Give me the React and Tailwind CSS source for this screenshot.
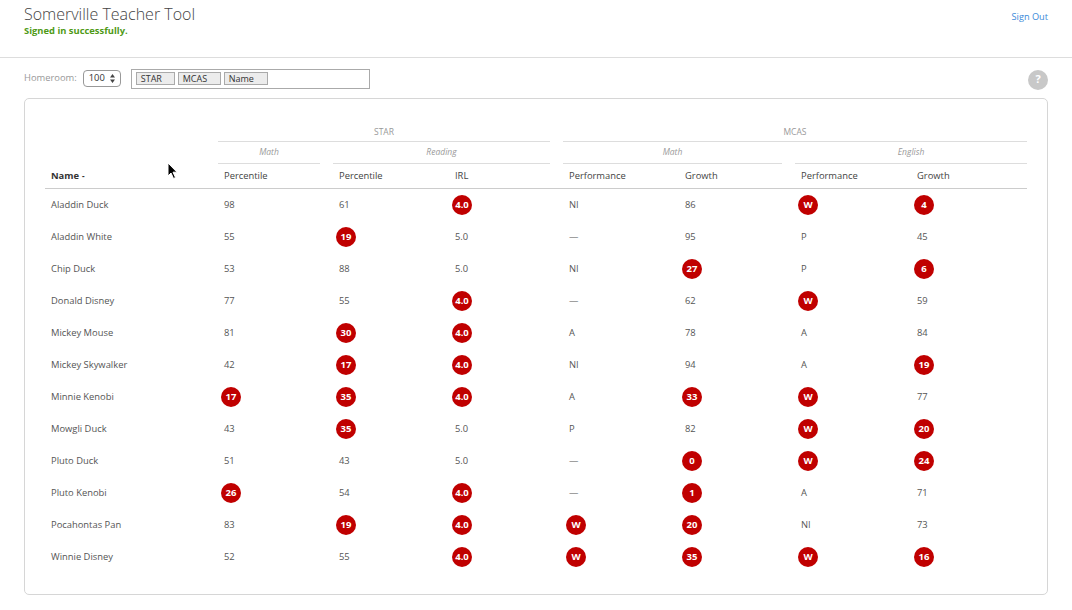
const rows = [
  ["Aladdin Duck", "98", "61", ["4.0"], "NI", "86", ["W"], ["4"]],
  ["Aladdin White", "55", ["19"], "5.0", "—", "95", "P", "45"],
  ["Chip Duck", "53", "88", "5.0", "NI", ["27"], "P", ["6"]],
  ["Donald Disney", "77", "55", ["4.0"], "—", "62", ["W"], "59"],
  ["Mickey Mouse", "81", ["30"], ["4.0"], "A", "78", "A", "84"],
  ["Mickey Skywalker", "42", ["17"], ["4.0"], "NI", "94", "A", ["19"]],
  ["Minnie Kenobi", ["17"], ["35"], ["4.0"], "A", ["33"], ["W"], "77"],
  ["Mowgli Duck", "43", ["35"], "5.0", "P", "82", ["W"], ["20"]],
  ["Pluto Duck", "51", "43", "5.0", "—", ["0"], ["W"], ["24"]],
  ["Pluto Kenobi", ["26"], "54", ["4.0"], "—", ["1"], "A", "71"],
  ["Pocahontas Pan", "83", ["19"], ["4.0"], ["W"], ["20"], "NI", "73"],
  ["Winnie Disney", "52", "55", ["4.0"], ["W"], ["35"], ["W"], ["16"]],
];

const cols = ["Percentile", "Percentile", "IRL", "Performance", "Growth", "Performance", "Growth"];

function Cell({ value }) {
  if (Array.isArray(value)) {
    return (
      <span className="-ml-[3px] inline-flex h-[20px] min-w-[20px] items-center justify-center rounded-full bg-[#c00000] px-[3px] text-[9.5px] font-bold text-white">
        {value[0]}
      </span>
    );
  }
  return <span>{value}</span>;
}

export default function App() {
  return (
    <div
      className="relative h-[610px] w-[1072px] overflow-hidden bg-white text-[9.4px] text-[#555]"
      style={{ fontFamily: '"Open Sans", "Liberation Sans", sans-serif' }}
    >
      {/* header */}
      <div className="flex h-[58px] items-start justify-between border-b border-[#ddd] px-[24px]">
        <div className="pt-[4px]">
          <h1 className="text-[16px] font-light leading-[20px] text-[#444]">Somerville Teacher Tool</h1>
          <p className="mt-[1px] text-[9.4px] font-bold leading-[12px] text-[#4f9a16]">Signed in successfully.</p>
        </div>
        <a className="mt-[10px] text-[9.2px] text-[#3b8ad9]">Sign Out</a>
      </div>

      {/* toolbar */}
      <div className="flex h-[40px] items-center justify-between px-[24px] pt-[1px]">
        <div className="flex items-center">
          <span className="text-[#999]">Homeroom:</span>
          <div className="ml-[6px] flex h-[17px] w-[38px] items-center justify-between rounded-[4px] border border-[#999] px-[5px] text-[9.4px] text-[#333]">
            <span>100</span>
            <svg width="5" height="9" viewBox="0 0 5 9">
              <path d="M2.5 0L5 3.5H0z M2.5 9L5 5.5H0z" fill="#444" />
            </svg>
          </div>
          <div className="ml-[10px] flex h-[20px] w-[239px] items-center gap-[3px] border border-[#aaa] px-[4px]">
            {[["STAR", 39], ["MCAS", 43], ["Name", 44]].map(([t, w]) => (
              <span
                key={t}
                style={{ width: w }}
                className="flex h-[13px] items-center border border-[#aaa] bg-[#ececec] px-[4px] text-[9px] leading-none text-[#333]"
              >
                {t}
              </span>
            ))}
          </div>
        </div>
        <div className="mt-[2px] flex h-[20px] w-[20px] items-center justify-center rounded-full bg-[#c8c8c8] text-[11px] font-bold text-white">
          ?
        </div>
      </div>

      {/* card */}
      <div className="mx-[24px] rounded-[5px] border border-[#d6d6d6] px-[20px] pb-[21px] pt-[24px]">
        <div className="grid grid-cols-[173px_115px_116px_114px_116px_116px_116px_116px]">
          {/* group row */}
          <div />
          <div className="col-span-3 mr-[13px] flex h-[19px] items-center justify-center border-b border-[#ddd] text-[8.5px] text-[#999]">
            STAR
          </div>
          <div className="col-span-4 flex h-[19px] items-center justify-center border-b border-[#ddd] text-[8.5px] text-[#999]">
            MCAS
          </div>

          {/* subgroup row */}
          <div />
          <div className="mr-[13px] flex h-[22px] items-center justify-center border-b border-[#ddd] text-[8.5px] italic text-[#999]">
            Math
          </div>
          <div className="col-span-2 mr-[13px] flex h-[22px] items-center justify-center border-b border-[#ddd] text-[8.5px] italic text-[#999]">
            Reading
          </div>
          <div className="col-span-2 mr-[13px] flex h-[22px] items-center justify-center border-b border-[#ddd] text-[8.5px] italic text-[#999]">
            Math
          </div>
          <div className="col-span-2 flex h-[22px] items-center justify-center border-b border-[#ddd] text-[8.5px] italic text-[#999]">
            English
          </div>

          {/* column header */}
          <div className="flex h-[25px] items-center border-b border-[#ccc] pl-[6px] font-bold text-[#333]">
            Name <span className="ml-[3px] text-[8px]">-</span>
          </div>
          {cols.map((c, i) => (
            <div key={i} className="flex h-[25px] items-center border-b border-[#ccc] pl-[6px] text-[#444]">
              {c}
            </div>
          ))}

          {/* rows */}
          {rows.map((r) =>
            r.map((v, j) => (
              <div key={r[0] + j} className="flex h-[32px] items-center pl-[6px]">
                <Cell value={v} />
              </div>
            ))
          )}
        </div>
      </div>

      {/* mouse cursor */}
      <svg className="absolute left-[167px] top-[162px]" width="12" height="18" viewBox="0 0 12 18">
        <path d="M1 1L1 14L4 11L6.5 16.5L8.5 15.5L6 10.2L10 10.2Z" fill="#000" stroke="#fff" strokeWidth="1" />
      </svg>
    </div>
  );
}
